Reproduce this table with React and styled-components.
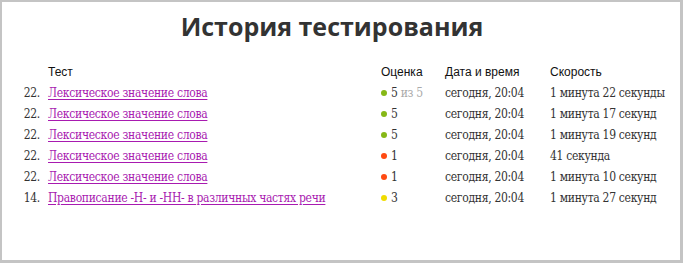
import React from "react";
import styled, { createGlobalStyle } from "styled-components";

const Global = createGlobalStyle`
  html, body { margin: 0; padding: 0; background: #fff; }
  * { box-sizing: border-box; }
`;

const Frame = styled.div`
  width: 683px;
  height: 263px;
  border-style: solid;
  border-color: #c4c4c4;
  border-width: 2px 3px 3px 2px;
  background: #fff;
  display: flex;
  flex-direction: column;
`;

const Title = styled.h1`
  margin: 6px 0 0;
  padding-right: 18px;
  font-family: "Open Sans", "DejaVu Sans", sans-serif;
  font-weight: 700;
  font-size: 25px;
  line-height: 36px;
  color: #333;
  text-align: center;
`;

const Table = styled.div`
  margin-top: 17px;
  display: flex;
  flex-direction: column;
`;

const Row = styled.div`
  display: grid;
  grid-template-columns: 38px 341px 64px 105px 1fr;
  height: 21px;
  align-items: center;
  font-family: ${(p) =>
    p.$head ? '"Liberation Sans", Arial, sans-serif' : '"DejaVu Serif Condensed", "DejaVu Serif", serif'};
  font-size: 12px;
  font-stretch: ${(p) => (p.$head ? "normal" : "condensed")};
  letter-spacing: ${(p) => (p.$head ? "0" : "-0.3px")};
  color: ${(p) => (p.$head ? "#111" : "#333")};
  white-space: nowrap;
`;

const Num = styled.span`
  text-align: right;
`;

const TestCell = styled.span`
  padding-left: 8px;
`;

const Link = styled.a`
  color: #a81ab0;
  text-decoration: underline;
  text-underline-offset: 2px;
`;

const Grade = styled.span`
  display: flex;
  align-items: center;
  gap: 4px;
`;

const Dot = styled.span`
  width: 6px;
  height: 6px;
  border-radius: 50%;
  background: ${(p) => p.$color};
  flex: none;
`;

const Of = styled.span`
  color: #aaa;
`;

const colors = { 5: "#86b817", 1: "#ff4a12", 3: "#f0dc00" };

const rows = [
  { n: 22, test: "Лексическое значение слова", g: 5, of: true, speed: "1 минута 22 секунды" },
  { n: 22, test: "Лексическое значение слова", g: 5, speed: "1 минута 17 секунд" },
  { n: 22, test: "Лексическое значение слова", g: 5, speed: "1 минута 19 секунд" },
  { n: 22, test: "Лексическое значение слова", g: 1, speed: "41 секунда" },
  { n: 22, test: "Лексическое значение слова", g: 1, speed: "1 минута 10 секунд" },
  { n: 14, test: "Правописание -Н- и -НН- в различных частях речи", g: 3, speed: "1 минута 27 секунд" },
];

export default function App() {
  return (
    <>
      <Global />
      <Frame>
        <Title>История тестирования</Title>
        <Table>
          <Row $head>
            <span />
            <TestCell>Тест</TestCell>
            <span>Оценка</span>
            <span>Дата и время</span>
            <span>Скорость</span>
          </Row>
          {rows.map((r, i) => (
            <Row key={i}>
              <Num>{r.n}.</Num>
              <TestCell>
                <Link href="#">{r.test}</Link>
              </TestCell>
              <Grade>
                <Dot $color={colors[r.g]} />
                <span>
                  {r.g}
                  {r.of && <Of> из 5</Of>}
                </span>
              </Grade>
              <span>сегодня, 20:04</span>
              <span>{r.speed}</span>
            </Row>
          ))}
        </Table>
      </Frame>
    </>
  );
}
